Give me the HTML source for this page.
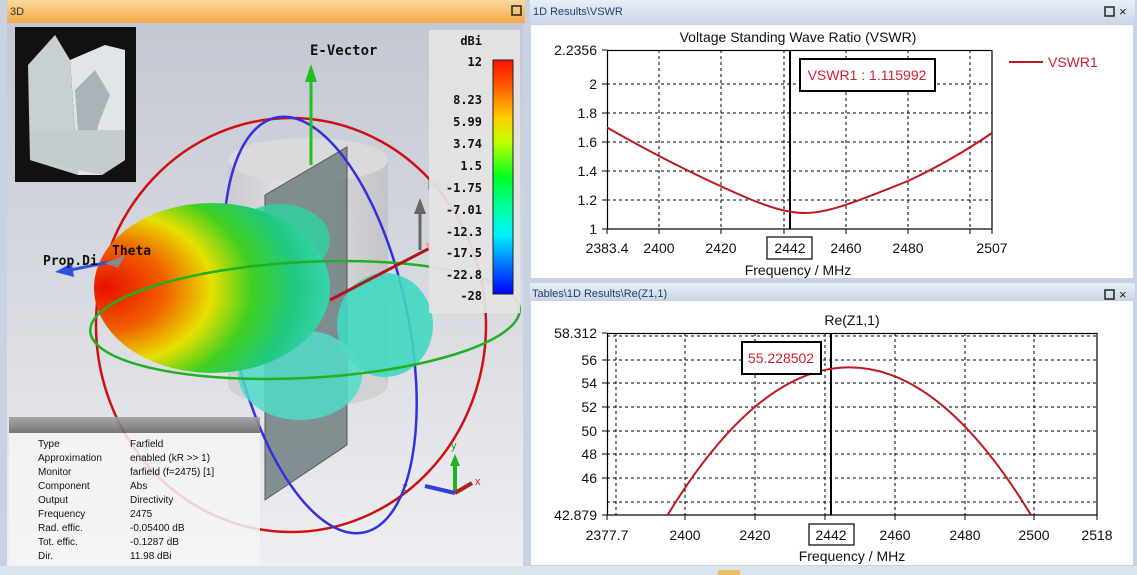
<!DOCTYPE html>
<html><head><meta charset="utf-8"><style>
html,body{margin:0;padding:0;width:1137px;height:575px;overflow:hidden;background:#d6e0ec}
svg{display:block}
.m{font-family:"DejaVu Sans Mono","Liberation Mono",monospace;font-weight:bold}
.s{font-family:"Liberation Sans",sans-serif}
</style></head><body>
<svg width="1137" height="575" viewBox="0 0 1137 575" xmlns="http://www.w3.org/2000/svg">
<defs>
<linearGradient id="bg3d" x1="0" y1="0" x2="0" y2="1"><stop offset="0" stop-color="#c4c8d2"/><stop offset="0.6" stop-color="#dcdee4"/><stop offset="1" stop-color="#eeeff2"/></linearGradient>
<linearGradient id="org" x1="0" y1="0" x2="0" y2="1"><stop offset="0" stop-color="#fcd89a"/><stop offset="1" stop-color="#f3a948"/></linearGradient>
<linearGradient id="blu" x1="0" y1="0" x2="0" y2="1"><stop offset="0" stop-color="#e8eef6"/><stop offset="1" stop-color="#ccd8e6"/></linearGradient>
<linearGradient id="cb" x1="0" y1="0" x2="0" y2="1"><stop offset="0" stop-color="#ff1000"/><stop offset="0.12" stop-color="#ff6000"/><stop offset="0.25" stop-color="#ffd000"/><stop offset="0.35" stop-color="#c0ff00"/><stop offset="0.5" stop-color="#00ff20"/><stop offset="0.65" stop-color="#00ffb0"/><stop offset="0.75" stop-color="#00f0ff"/><stop offset="0.88" stop-color="#0070ff"/><stop offset="1" stop-color="#0000ff"/></linearGradient>
<radialGradient id="lobe" cx="0.05" cy="0.5" r="1"><stop offset="0" stop-color="#e81000"/><stop offset="0.25" stop-color="#f06000"/><stop offset="0.45" stop-color="#e8e000"/><stop offset="0.62" stop-color="#40d020"/><stop offset="0.8" stop-color="#20c880"/><stop offset="1" stop-color="#40d8c0"/></radialGradient>
<linearGradient id="cyl" x1="0" y1="0" x2="1" y2="0"><stop offset="0" stop-color="#c8c8cc"/><stop offset="0.4" stop-color="#e6e6e8"/><stop offset="1" stop-color="#c0c0c4"/></linearGradient>
<linearGradient id="hdr" x1="0" y1="0" x2="0" y2="1"><stop offset="0" stop-color="#a0a0a0"/><stop offset="1" stop-color="#6a6a6a"/></linearGradient>
</defs>

<rect x="0" y="0" width="528" height="575" fill="#c8d2e0"/>
<rect x="7" y="0" width="518" height="23" fill="url(#org)"/>
<text x="10" y="15" class="s" font-size="11" fill="#333">3D</text>
<rect x="512" y="6" width="9" height="9" fill="none" stroke="#222" stroke-width="1.5"/>
<rect x="7" y="23" width="516" height="543" fill="url(#bg3d)"/>

<rect x="228" y="160" width="160" height="225" fill="url(#cyl)" opacity="0.8"/>
<ellipse cx="308" cy="160" rx="80" ry="22" fill="#dadadc"/>
<ellipse cx="308" cy="385" rx="80" ry="22" fill="#d2d2d4"/>
<polygon points="265,195 347,147 347,445 265,500" fill="#6a7a7c" opacity="0.8" stroke="#333" stroke-width="1"/>

<ellipse cx="291" cy="325" rx="195" ry="207" fill="none" stroke="#d01010" stroke-width="2.5"/>
<ellipse cx="320" cy="325" rx="88" ry="212" transform="rotate(-12 320 325)" fill="none" stroke="#3030e0" stroke-width="2.5"/>

<ellipse cx="385" cy="325" rx="48" ry="52" fill="#40d8c0" opacity="0.9"/>
<ellipse cx="300" cy="375" rx="62" ry="45" fill="#50dcc8" opacity="0.85"/>
<ellipse cx="280" cy="240" rx="50" ry="36" fill="#30d0a0" opacity="0.85"/>
<ellipse cx="212" cy="288" rx="118" ry="85" fill="url(#lobe)"/>

<ellipse cx="305" cy="320" rx="215" ry="58" transform="rotate(-3 305 320)" fill="none" stroke="#20b020" stroke-width="2.5"/>

<line x1="311" y1="165" x2="311" y2="80" stroke="#20c020" stroke-width="3"/>
<polygon points="311,64 305,82 317,82" fill="#20c020"/>
<text x="310" y="55" class="m" font-size="14" fill="#111">E-Vector</text>
<line x1="330" y1="300" x2="430" y2="248" stroke="#b01818" stroke-width="3"/>
<polygon points="442,242 425,243 432,255" fill="#f0a0a0"/>
<line x1="420" y1="250" x2="420" y2="210" stroke="#666" stroke-width="3"/>
<polygon points="420,198 414,214 426,214" fill="#666"/>
<text x="427" y="190" class="m" font-size="13" fill="#999">Phi</text>
<line x1="110" y1="262" x2="70" y2="270" stroke="#3050e0" stroke-width="3"/>
<polygon points="55,272 72,263 74,277" fill="#3050e0"/>
<polygon points="105,263 125,255 118,268" fill="#888"/>
<text x="43" y="265" class="m" font-size="13" fill="#111">Prop.Di</text>
<text x="112" y="255" class="m" font-size="13" fill="#111">Theta</text>

<rect x="15" y="27" width="121" height="155" fill="#111"/>
<polygon points="28,65 55,35 70,60 78,175 30,160" fill="#c8d0d4"/>
<polygon points="70,60 105,45 125,50 125,160 102,175 78,175" fill="#dfe5e8"/>
<polygon points="75,90 95,70 110,95 100,120 88,160 80,160" fill="#aab4b8"/>
<polygon points="30,130 125,130 125,160 102,175 30,160" fill="#c4ccd0"/>

<rect x="429" y="30" width="91" height="283" fill="#e4e4e4" opacity="0.92"/>
<rect x="493" y="60" width="20" height="234" fill="url(#cb)" stroke="#222" stroke-width="1"/>
<g class="m" font-size="12" fill="#111" text-anchor="end">
<text x="482" y="45">dBi</text>
<text x="482" y="66">12</text>
<text x="482" y="104">8.23</text>
<text x="482" y="126">5.99</text>
<text x="482" y="148">3.74</text>
<text x="482" y="170">1.5</text>
<text x="482" y="192">-1.75</text>
<text x="482" y="214">-7.01</text>
<text x="482" y="236">-12.3</text>
<text x="482" y="257">-17.5</text>
<text x="482" y="279">-22.8</text>
<text x="482" y="300">-28</text>
</g>

<line x1="455" y1="493" x2="455" y2="462" stroke="#20b020" stroke-width="4"/>
<polygon points="455,454 450,466 460,466" fill="#20b020"/>
<line x1="455" y1="493" x2="425" y2="486" stroke="#3040e0" stroke-width="4"/>
<line x1="455" y1="493" x2="472" y2="483" stroke="#b02020" stroke-width="4"/>
<text x="451" y="449" class="s" font-size="11" fill="#20a020">y</text>
<text x="402" y="491" class="s" font-size="12" fill="#3040b0">z</text>
<text x="475" y="485" class="s" font-size="11" fill="#d02020">x</text>

<rect x="9" y="417" width="251" height="16" fill="url(#hdr)" opacity="0.9"/>
<rect x="9" y="433" width="251" height="133" fill="#f4f4f4" opacity="0.85"/>
<g class="s" font-size="10" fill="#111">
<text x="38" y="447">Type</text><text x="130" y="447">Farfield</text>
<text x="38" y="461">Approximation</text><text x="130" y="461">enabled (kR &gt;&gt; 1)</text>
<text x="38" y="475">Monitor</text><text x="130" y="475">farfield (f=2475) [1]</text>
<text x="38" y="489">Component</text><text x="130" y="489">Abs</text>
<text x="38" y="503">Output</text><text x="130" y="503">Directivity</text>
<text x="38" y="517">Frequency</text><text x="130" y="517">2475</text>
<text x="38" y="531">Rad. effic.</text><text x="130" y="531">-0.05400 dB</text>
<text x="38" y="545">Tot. effic.</text><text x="130" y="545">-0.1287 dB</text>
<text x="38" y="559">Dir.</text><text x="130" y="559">11.98 dBi</text>
</g>

<rect x="528" y="0" width="609" height="575" fill="#c8d4e4"/>
<rect x="530" y="0" width="605" height="24" fill="url(#blu)"/>
<text x="533" y="15" class="s" font-size="11" fill="#1e3c78">1D Results\VSWR</text>
<rect x="1105" y="7" width="9" height="9" fill="none" stroke="#222" stroke-width="1.5"/>
<text x="1119" y="16" class="s" font-size="13" fill="#222">×</text>
<rect x="531" y="25" width="602" height="253" fill="#fff"/>

<rect x="530" y="283" width="605" height="17" fill="url(#blu)"/>
<text x="532" y="297" class="s" font-size="11" fill="#1e3c78">Tables\1D Results\Re(Z1,1)</text>
<rect x="1105" y="290" width="9" height="9" fill="none" stroke="#222" stroke-width="1.5"/>
<text x="1119" y="299" class="s" font-size="13" fill="#222">×</text>
<rect x="531" y="301" width="602" height="264" fill="#fff"/>
<rect x="0" y="566" width="1137" height="9" fill="#d8e4f0"/>
<rect x="718" y="570" width="22" height="5" fill="#f0c060"/>

<g stroke="#000" stroke-width="1" stroke-dasharray="3,3" fill="none">
<path d="M659,50V229M721,50V229M784,50V229M846,50V229M908,50V229M970,50V229"/>
<path d="M607,84H992M607,113H992M607,142H992M607,171H992M607,200H992"/>
</g>
<rect x="607.5" y="50.5" width="384.5" height="178.5" fill="none" stroke="#000" stroke-width="1.2"/>
<g stroke="#000"><path d="M602,50h5M602,84h5M602,113h5M602,142h5M602,171h5M602,200h5M602,229h5M607,229v5M659,229v5M721,229v5M784,229v5M846,229v5M908,229v5M970,229v5M992,229v5"/></g>
<line x1="790" y1="50" x2="790" y2="229" stroke="#000" stroke-width="2"/>
<path d="M607,127.5 C650,152 700,178 752,200 C775,209 790,213 805,213 C830,213 860,200 908,181 C940,166 970,148 992,133" fill="none" stroke="#c01820" stroke-width="2"/>
<rect x="800" y="59" width="135" height="32" fill="#fff" stroke="#000" stroke-width="2"/>
<text x="867" y="80" class="s" font-size="14" fill="#d02030" text-anchor="middle">VSWR1 : 1.115992</text>
<line x1="1009" y1="62" x2="1043" y2="62" stroke="#c01820" stroke-width="2"/>
<text x="1048" y="67" class="s" font-size="14" fill="#d02030">VSWR1</text>
<text x="798" y="42" class="s" font-size="14" fill="#111" text-anchor="middle">Voltage Standing Wave Ratio (VSWR)</text>
<g class="s" font-size="14" fill="#111" text-anchor="end">
<text x="597" y="55">2.2356</text><text x="597" y="89">2</text><text x="597" y="118">1.8</text><text x="597" y="147">1.6</text><text x="597" y="176">1.4</text><text x="597" y="205">1.2</text><text x="597" y="234">1</text>
</g>
<g class="s" font-size="14" fill="#111" text-anchor="middle">
<text x="607" y="253">2383.4</text><text x="659" y="253">2400</text><text x="721" y="253">2420</text><text x="790" y="253">2442</text><text x="846" y="253">2460</text><text x="908" y="253">2480</text><text x="992" y="253">2507</text>
<text x="798" y="275">Frequency / MHz</text>
</g>
<rect x="767" y="237" width="45" height="22" fill="none" stroke="#000" stroke-width="1.2"/>

<g stroke="#000" stroke-width="1" stroke-dasharray="3,3" fill="none">
<path d="M616,333V515M685,333V515M755,333V515M825,333V515M895,333V515M965,333V515M1034,333V515"/>
<path d="M607,336H1097M607,360H1097M607,383H1097M607,407H1097M607,431H1097M607,454H1097M607,478H1097M607,502H1097"/>
</g>
<rect x="607.5" y="333.5" width="489.5" height="181.5" fill="none" stroke="#000" stroke-width="1.2"/>
<g stroke="#000"><path d="M602,333h5M602,360h5M602,383h5M602,407h5M602,431h5M602,454h5M602,478h5M602,515h5M607,515v5M685,515v5M755,515v5M825,515v5M895,515v5M965,515v5M1034,515v5M1097,515v5"/></g>
<line x1="831" y1="333" x2="831" y2="515" stroke="#000" stroke-width="2"/>
<path d="M667.6,515 Q758,367 849.5,367.4 Q941,367 1031,515" fill="none" stroke="#c01820" stroke-width="2"/>
<rect x="742" y="342" width="79" height="32" fill="#fff" stroke="#000" stroke-width="2"/>
<text x="781" y="363" class="s" font-size="14" fill="#d02030" text-anchor="middle">55.228502</text>
<text x="852" y="325" class="s" font-size="14" fill="#111" text-anchor="middle">Re(Z1,1)</text>
<g class="s" font-size="14" fill="#111" text-anchor="end">
<text x="597" y="338">58.312</text><text x="597" y="365">56</text><text x="597" y="388">54</text><text x="597" y="412">52</text><text x="597" y="436">50</text><text x="597" y="459">48</text><text x="597" y="483">46</text><text x="597" y="520">42.879</text>
</g>
<g class="s" font-size="14" fill="#111" text-anchor="middle">
<text x="607" y="540">2377.7</text><text x="685" y="540">2400</text><text x="755" y="540">2420</text><text x="831" y="540">2442</text><text x="895" y="540">2460</text><text x="965" y="540">2480</text><text x="1034" y="540">2500</text><text x="1097" y="540">2518</text>
<text x="852" y="561">Frequency / MHz</text>
</g>
<rect x="809" y="524" width="45" height="21" fill="none" stroke="#000" stroke-width="1.2"/>
</svg>
</body></html>
